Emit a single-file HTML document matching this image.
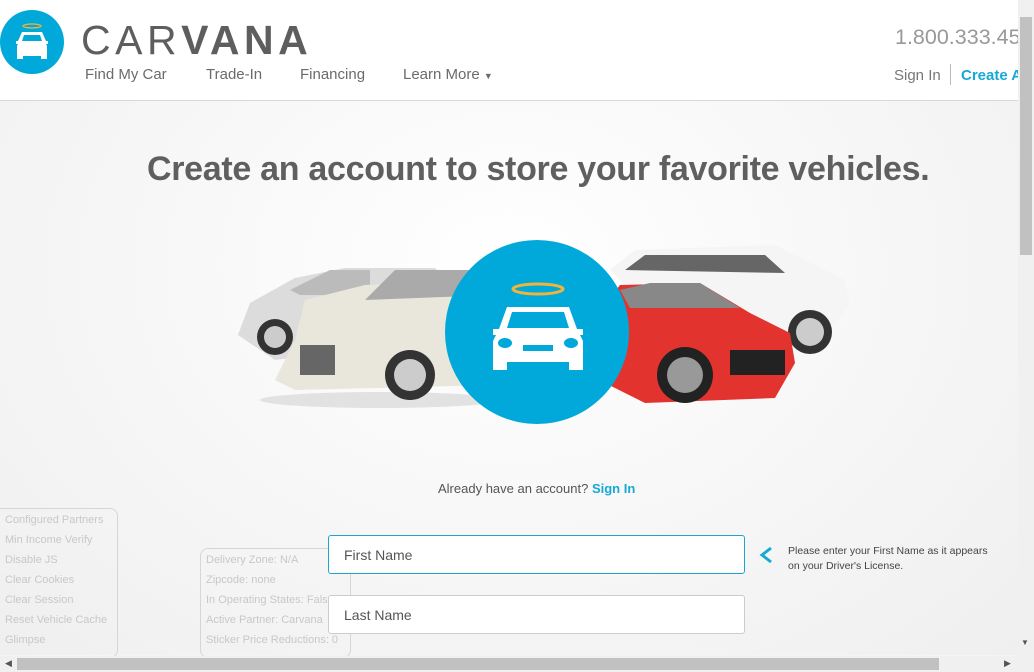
<!DOCTYPE html>
<html><head><meta charset="utf-8"><style>
*{margin:0;padding:0;box-sizing:border-box}
body{width:1034px;height:672px;overflow:hidden;position:relative;font-family:"Liberation Sans",sans-serif;background:#f4f4f4}
.hdr{position:absolute;left:0;top:0;width:1018px;height:101px;background:#fff;border-bottom:1px solid #d8d8d8}
.main{position:absolute;left:0;top:101px;width:1018px;height:554px;background:radial-gradient(ellipse at 50% 30%,#fff 0%,#f7f7f7 50%,#efefef 100%)}
.abs{position:absolute;white-space:nowrap}
.nav{color:#6b6b6b;font-size:15px;top:66px}
.dbg{color:#c8c8c8;font-size:11px;line-height:20px}
.box{position:absolute;border:1px solid #d6d6d6;border-radius:8px}
.inp{position:absolute;left:328px;width:417px;height:39px;border-radius:3px;background:#fff;font-size:14px;color:#555;padding:11px 0 0 15px}
</style></head><body>
<div class="hdr"></div>
<div class="main"></div>
<svg class="abs" style="left:0;top:10px" width="64" height="64" viewBox="0 0 64 64">
<circle cx="32" cy="32" r="32" fill="#00a9d9"/>
<ellipse cx="32" cy="16" rx="9" ry="2" fill="none" stroke="#f0b43c" stroke-width="1.3"/>
<path d="M22 22h20l4 9h2v3h-2l1 2v13h-6v-3H23v3h-6V36l1-2h-2v-3h2z" fill="#fff"/>
<path d="M24 25h16l2 6H22z" fill="#00a9d9"/>
</svg>
<div class="abs" style="left:81px;top:18px;font-size:41px;color:#5e5e5e;letter-spacing:4.5px;line-height:44px"><span style="font-weight:300">CAR</span><b>VANA</b></div>
<div class="abs nav" style="left:85px">Find My Car</div>
<div class="abs nav" style="left:206px">Trade-In</div>
<div class="abs nav" style="left:300px">Financing</div>
<div class="abs nav" style="left:403px">Learn More <span style="font-size:9px">▼</span></div>
<div class="abs" style="left:895px;top:25px;font-size:21.5px;color:#999">1.800.333.45</div>
<div class="abs" style="left:894px;top:67px;font-size:15px;color:#777">Sign In</div>
<div class="abs" style="left:950px;top:64px;width:1px;height:21px;background:#bbb"></div>
<div class="abs" style="left:961px;top:67px;font-size:15px;color:#16a9d6;font-weight:bold">Create A</div>
<div class="abs" style="left:147px;top:150px;font-size:34px;font-weight:bold;color:#5f5f5f;letter-spacing:-0.3px">Create an account to store your favorite vehicles.</div>
<svg class="abs" style="left:230px;top:240px" width="630" height="190" viewBox="0 0 630 190">
<ellipse cx="150" cy="160" rx="120" ry="8" fill="#e2e2e2"/>
<path d="M8 95l12-32 45-25 50-10 90 0 25 22 5 20-20 30-170 20z" fill="#dcdcdc"/>
<path d="M60 50l40-20 40 0v25H70z" fill="#bbb"/>
<circle cx="45" cy="97" r="18" fill="#333"/><circle cx="45" cy="97" r="11" fill="#ccc"/>
<path d="M65 100l10-40 60-15 80-5 60 10 10 50-20 45-200 5-20-10z" fill="#e9e6dc"/>
<path d="M135 60l30-30 80 0 20 25z" fill="#aaa"/>
<rect x="70" y="105" width="35" height="30" fill="#666"/>
<circle cx="180" cy="135" r="25" fill="#333"/><circle cx="180" cy="135" r="16" fill="#ccc"/>
<path d="M380 30l25-20 140-5 40 20 30 15 5 25-20 25H440z" fill="#f5f5f5"/>
<path d="M395 30l20-15h120l20 18z" fill="#666"/>
<circle cx="580" cy="92" r="22" fill="#333"/><circle cx="580" cy="92" r="14" fill="#ccc"/>
<path d="M370 70l20-25 80-2 50 30 40 20 5 30-20 35-130 5-40-20z" fill="#e3332f"/>
<path d="M390 50l30-7 50 0 40 25H400z" fill="#888"/>
<rect x="500" y="110" width="55" height="25" fill="#222"/>
<circle cx="455" cy="135" r="28" fill="#222"/><circle cx="455" cy="135" r="18" fill="#999"/>
</svg>
<svg class="abs" style="left:445px;top:240px" width="184" height="184" viewBox="0 0 184 184">
<circle cx="92" cy="92" r="92" fill="#00a9d9"/>
<ellipse cx="93" cy="49" rx="25" ry="5" fill="none" stroke="#f0b43c" stroke-width="3"/>
<path d="M62 67h62l8 22h6v6h-3l3 6v29h-14v-8H62v8H48v-29l3-6h-3v-6h6z" fill="#fff"/>
<path d="M67 72h52l5 16H62z" fill="#00a9d9"/>
<rect x="78" y="105" width="30" height="6" fill="#00a9d9"/>
<ellipse cx="60" cy="103" rx="7" ry="5" fill="#00a9d9"/><ellipse cx="126" cy="103" rx="7" ry="5" fill="#00a9d9"/>
</svg>
<div class="abs" style="left:438px;top:481px;font-size:13px;color:#555">Already have an account? <b style="color:#16a9d6">Sign In</b></div>
<div class="box" style="left:-10px;top:508px;width:128px;height:150px"></div>
<div class="abs dbg" style="left:5px;top:510px">Configured Partners<br>Min Income Verify<br>Disable JS<br>Clear Cookies<br>Clear Session<br>Reset Vehicle Cache<br>Glimpse</div>
<div class="box" style="left:200px;top:548px;width:151px;height:110px"></div>
<div class="abs dbg" style="left:206px;top:550px">Delivery Zone: N/A<br>Zipcode: none<br>In Operating States: False<br>Active Partner: Carvana<br>Sticker Price Reductions: 0</div>
<div class="inp" style="top:535px;border:1px solid #1aa6d4">First Name</div>
<div class="inp" style="top:595px;border:1px solid #ccc">Last Name</div>
<svg class="abs" style="left:758px;top:545px" width="16" height="20"><path d="M13 3L4 10l9 7" fill="none" stroke="#16a9d6" stroke-width="3"/></svg>
<div class="abs" style="left:788px;top:544px;font-size:10.5px;color:#444;line-height:15px">Please enter your First Name as it appears<br>on your Driver's License.</div>
<div class="abs" style="left:1018px;top:0;width:16px;height:656px;background:#f0f0f0"></div>
<div class="abs" style="left:1020px;top:17px;width:12px;height:238px;background:#c1c1c1"></div>
<div class="abs" style="left:1021px;top:638px;font-size:8px;color:#555">▼</div>
<div class="abs" style="left:0;top:656px;width:1034px;height:16px;background:#f0f0f0"></div>
<div class="abs" style="left:17px;top:658px;width:922px;height:12px;background:#c1c1c1"></div>
<div class="abs" style="left:5px;top:658px;font-size:9px;color:#555">◀</div>
<div class="abs" style="left:1004px;top:658px;font-size:9px;color:#555">▶</div>
</body></html>
